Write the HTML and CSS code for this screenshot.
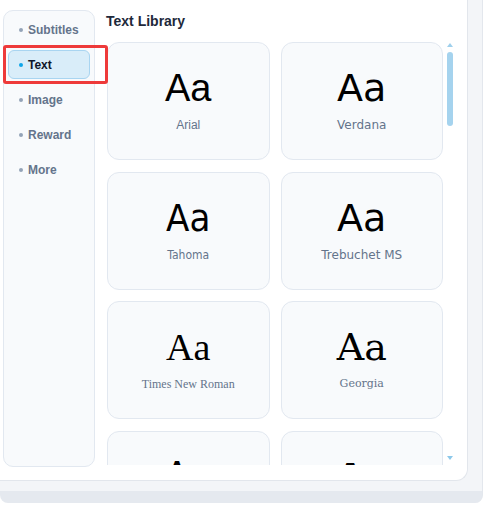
FILE: index.html
```html
<!DOCTYPE html>
<html lang="en">
<head>
    <meta charset="UTF-8">
    <meta name="viewport" content="width=device-width, initial-scale=1.0">
    <title>Text Library</title>
    <link rel="stylesheet" href="styles.css">
</head>
<body>
    <div class="shell">
        <div class="sheet">
            <div class="panel">
                <nav class="sidebar">
                    <div class="nav-item"><span class="dot"></span>Subtitles</div>
                    <div class="nav-item active"><span class="dot"></span>Text</div>
                    <div class="nav-item"><span class="dot"></span>Image</div>
                    <div class="nav-item"><span class="dot"></span>Reward</div>
                    <div class="nav-item"><span class="dot"></span>More</div>
                </nav>

                <div class="highlight"></div>

                <section class="library">
                    <h2 class="library-title">Text Library</h2>
                    <div class="library-body">
                        <div class="viewport">
                            <div class="font-grid">
                                <div class="font-card">
                                    <span class="sample f-arial">Aa</span>
                                    <span class="name f-arial">Arial</span>
                                </div>
                                <div class="font-card">
                                    <span class="sample f-verdana">Aa</span>
                                    <span class="name f-verdana">Verdana</span>
                                </div>
                                <div class="font-card">
                                    <span class="sample f-tahoma">Aa</span>
                                    <span class="name f-tahoma">Tahoma</span>
                                </div>
                                <div class="font-card">
                                    <span class="sample f-trebuchet">Aa</span>
                                    <span class="name f-trebuchet">Trebuchet MS</span>
                                </div>
                                <div class="font-card">
                                    <span class="sample f-times">Aa</span>
                                    <span class="name f-times">Times New Roman</span>
                                </div>
                                <div class="font-card">
                                    <span class="sample f-georgia">Aa</span>
                                    <span class="name f-georgia">Georgia</span>
                                </div>
                                <div class="font-card">
                                    <span class="sample f-courier">Aa</span>
                                    <span class="name f-courier">Courier New</span>
                                </div>
                                <div class="font-card">
                                    <span class="sample f-impact">Aa</span>
                                    <span class="name f-impact">Impact</span>
                                </div>
                            </div>
                        </div>
                        <div class="scrollbar">
                            <span class="arrow up"></span>
                            <span class="thumb"></span>
                            <span class="arrow down"></span>
                        </div>
                    </div>
                </section>
            </div>
        </div>
    </div>
</body>
</html>
```

FILE: styles.css
```css
body {
    margin: 0;
    background-color: #fff;
    font-family: "Liberation Sans", Arial, sans-serif;
}

/* outer frame: grey footer band under the panel */
.shell {
    width: 482px;
    background-color: #e5e9ef;
    border-right: 1px solid #e3e7ed;
    border-radius: 0 0 8px 8px;
    padding-bottom: 12px;
}

.sheet {
    background-color: #f3f5f8;
    padding: 0 14px 10px 0;
}

.panel {
    position: relative;
    height: 470px;
    background-color: #fff;
    border-right: 1px solid #e2e6ec;
    border-bottom: 1px solid #e2e6ec;
    border-bottom-right-radius: 12px;
    padding: 10px 0 0 3px;
    display: flex;
    gap: 11px;
}

/* left menu */
.sidebar {
    width: 82px;
    height: 447px;
    background-color: #f8fafc;
    border: 1px solid #e2e8f0;
    border-radius: 10px;
    padding: 4px;
    display: flex;
    flex-direction: column;
    gap: 6px;
}

.nav-item {
    height: 27px;
    border: 1px solid transparent;
    border-radius: 6px;
    padding-left: 10px;
    display: flex;
    align-items: center;
    gap: 5px;
    font-size: 12px;
    font-weight: bold;
    color: #64748b;
}

.dot {
    width: 4px;
    height: 4px;
    border-radius: 50%;
    background-color: #94a3b8;
}

.nav-item.active {
    background-color: #d9edf9;
    border-color: #a9d5f1;
    color: #0f172a;
}

.nav-item.active .dot {
    background-color: #0ea5e9;
}

/* red marker drawn over the selected menu entry */
.highlight {
    position: absolute;
    left: 3px;
    top: 45px;
    width: 99px;
    height: 33px;
    border: 3px solid #ee3a3a;
    border-radius: 3px;
}

/* font library */
.library {
    display: flex;
    flex-direction: column;
}

.library-title {
    margin: 3px 0 12px 0;
    font-size: 14px;
    line-height: 17px;
    font-weight: bold;
    color: #1e293b;
}

.library-body {
    display: flex;
    gap: 3px;
    padding-left: 1px;
}

.viewport {
    width: 336px;
    height: 423px;
    overflow: hidden;
}

.font-grid {
    display: grid;
    grid-template-columns: repeat(2, 1fr);
    gap: 11.5px 11px;
}

.font-card {
    height: 116px;
    background-color: #f8fafc;
    border: 1px solid #e2e8f0;
    border-radius: 12px;
    display: flex;
    flex-direction: column;
    align-items: center;
    justify-content: center;
}

.sample {
    font-size: 38px;
    line-height: 1;
    color: #000;
}

.name {
    margin-top: 10px;
    font-size: 12px;
    line-height: 16px;
    color: #64748b;
}

.f-arial { font-family: "Liberation Sans", Arial, sans-serif; }
.f-verdana { font-family: "DejaVu Sans", Verdana, sans-serif; }
.f-tahoma { font-family: "DejaVu Sans Condensed", Tahoma, sans-serif; }
.f-trebuchet { font-family: "DejaVu Sans", "Trebuchet MS", sans-serif; }
.f-times { font-family: "Liberation Serif", "Times New Roman", serif; }
.f-georgia { font-family: "DejaVu Serif", Georgia, serif; }
.f-courier { font-family: "Liberation Mono", "Courier New", monospace; }
.f-impact { font-family: "DejaVu Sans Condensed", Impact, sans-serif; font-weight: bold; }

.name.f-georgia { font-size: 11px; }

/* thin scrollbar with arrow caps */
.scrollbar {
    width: 7px;
    height: 420px;
    display: flex;
    flex-direction: column;
    align-items: center;
}

.arrow {
    width: 0;
    height: 0;
    border-left: 3px solid transparent;
    border-right: 3px solid transparent;
}

.arrow.up {
    margin-top: 1px;
    border-bottom: 4px solid #9fd0ec;
}

.arrow.down {
    margin-top: auto;
    margin-bottom: 2px;
    border-top: 4px solid #8cc8ea;
}

.thumb {
    width: 6px;
    height: 74px;
    margin-top: 5px;
    border-radius: 3px;
    background-color: #a5d3ee;
}
```
